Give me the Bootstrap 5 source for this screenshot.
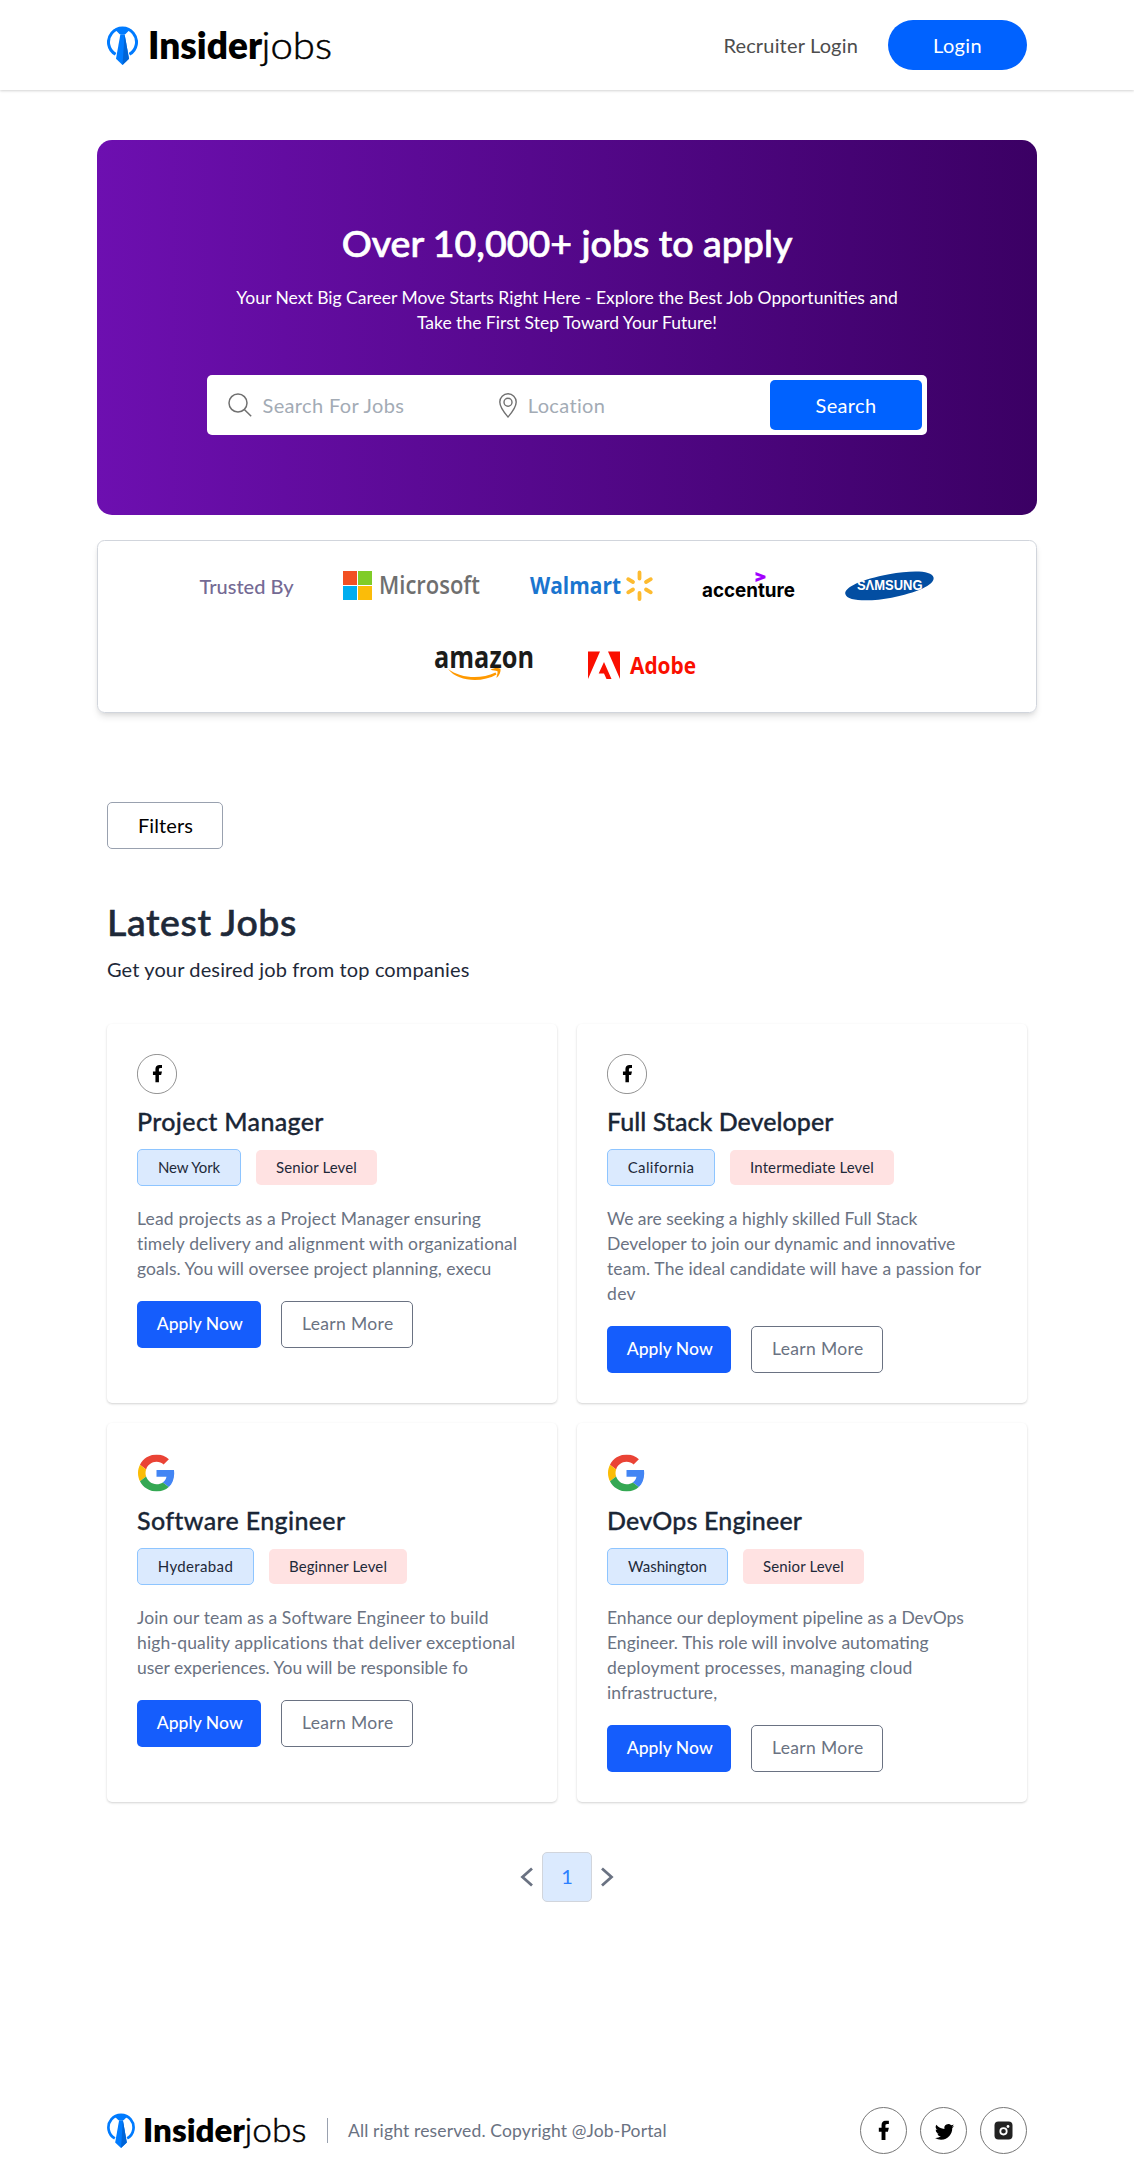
<!DOCTYPE html>
<html lang="en">
<head>
<meta charset="utf-8">
<meta name="viewport" content="width=device-width, initial-scale=1">
<title>Insiderjobs</title>
<link rel="stylesheet" href="https://cdn.jsdelivr.net/npm/bootstrap@5.3.0/dist/css/bootstrap.min.css">
<style>
body{font-family:Lato,"Open Sans",sans-serif;font-size:20px;line-height:30px;color:#1e2939;background:#fff}
svg{display:block;flex:none;overflow:visible}
.ls-a{letter-spacing:.05px}.ls-b{letter-spacing:.12px}.ls-c{letter-spacing:.17px}.ls-d{letter-spacing:.35px}.ls-e{letter-spacing:.6px}.ls-n{letter-spacing:-.14px}
.page-wrap{width:920px}
.wide-wrap{width:940px}
.site-head{height:90px;box-shadow:0 1px 3px rgba(0,0,0,.1),0 1px 2px rgba(0,0,0,.08)}
.recruiter{color:#4d4d4d;text-decoration:none;padding-bottom:1px}
.btn-login{width:139px;height:50px;border-radius:25px;background:#0062ff;color:#fff;font-size:20px;padding:0 0 1px}
.hero{margin-top:50px;height:375px;border-radius:15px;background:linear-gradient(to right,#6d0fb0,#3b0064);color:#fff;padding-top:79.5px}
.hero h1{font-size:37.5px;line-height:45px;font-weight:500;margin:0 0 20.5px;-webkit-text-stroke:.7px currentColor}
.hero-sub{font-size:17.5px;line-height:25px;margin-bottom:40px}
.search-box{width:720px;height:60px;border-radius:5px;background:#fff;padding:5px}
.search-box input{border:0;outline:0;background:none;padding:0;width:200px;color:#4a5565}
.search-box input::placeholder{color:#a3abb5;opacity:1}
.in-query{margin-left:10.5px}
.in-place{margin-left:11px}
.pin-field{margin-left:-6px}
.btn-find{width:152px;height:50px;border-radius:5px;background:#0062ff;color:#fff;font-size:20px;padding:0 0 1px}
.trusted{margin-top:25px;height:173px;border:1px solid #d1d5dc;border-radius:7.5px;box-shadow:0 5px 7px -1px rgba(0,0,0,.1),0 2px 5px -2px rgba(0,0,0,.1)}
.trusted-label{color:#746a94;font-weight:500;width:94px}
.brand-row{height:80px}
.brand-first{gap:49.5px;padding:9px 0 0 101.5px}
.brand-second{gap:54px;padding:10px 0 0 336px}
.btn-filters{width:116px;height:47px;border:1px solid #99a1af;border-radius:5px;color:#000;font-size:20px;padding:0 0 2px 1px;margin-top:89px}
h2{font-size:37.5px;line-height:50px;font-weight:500;margin:47.5px 0 7px;-webkit-text-stroke:.6px currentColor}
.job-grid{display:grid;grid-template-columns:450px 450px;gap:20px;margin-top:40px}
.job{height:379.2px;border-radius:5px;padding:30px;box-shadow:0 1px 3px rgba(0,0,0,.11),0 1px 2px rgba(0,0,0,.08)}
.job h3{font-size:25px;line-height:35px;font-weight:500;margin:10px 0;color:#1a2636;-webkit-text-stroke:.3px currentColor}
.tag-row{gap:15px}
.act-row{gap:20px}
.chip{font-size:15px;line-height:20px;padding:7.5px 0;border-radius:5px;text-align:center}
.chip-place{background:#dbeafe;border:1px solid #8ec5ff}
.chip-level{background:#ffe2e2}
.w104{width:104px}.w108{width:108px}.w117{width:117px}.w121{width:121px}.w133{width:133px}.w164{width:164px}
.job p{font-size:17.5px;line-height:25px;color:#6a7282;margin:20px 0;white-space:nowrap}
.btn-apply,.btn-learn{height:47px;border-radius:5px;font-size:17.5px;line-height:25px;padding:0 0 1px 1.5px}
.btn-apply{width:124px;background:#155dfc;color:#fff;font-weight:500}
.btn-learn{width:132px;border:1px solid #6a7282;color:#6a7282}
.pager{margin-top:50px;height:50px;gap:9px}
.pager-num{width:50px;height:50px;border:1px solid #d1d5dc;border-radius:5px;background:#dbeafe;color:#2b7fff;text-decoration:none;padding-bottom:1px}
footer{margin-top:205px;height:62px}
.foot-bar{height:47px}
.foot-rule{width:1px;height:25px;background:#99a1af;margin:0 20px}
.foot-note{font-size:17.5px;line-height:25px;color:#6a7282;letter-spacing:.14px}
.social{gap:13px}
</style>
</head>
<body>
<svg width="0" height="0" class="position-absolute" aria-hidden="true">
<defs>
<symbol id="mark-tie" viewBox="0 0 31 39">
<path d="M8.6 28.3A14 14 0 1 1 22.4 28.3" fill="none" stroke="#007bff" stroke-width="3"/>
<path d="M6.5 3.500Q15.500 0 24.500 3.500L21.500 5 18.300 8.200H12.700L9.500 5z" fill="#007bff"/>
<path d="M13.400 8.200h4.200L22 32.800 15.500 39 9 32.800z" fill="#007bff"/>
<path d="M17.600 8.200L22 32.800 15.500 39z" fill="#0064d6"/>
</symbol>
<symbol id="ic-fb" viewBox="7 2 10.5 20"><path d="M14 13.5h2.5l1-4H14v-2c0-1.03 0-2 2-2h1.5V2.14c-.326-.043-1.557-.14-2.857-.14C11.928 2 10 3.657 10 6.7v2.8H7v4h3V22h4z"/></symbol>
<symbol id="fb-round" viewBox="0 0 40 40"><circle cx="20" cy="20" r="19.6" fill="#fff" stroke="#777" stroke-width=".8"/><use href="#ic-fb" x="15.7" y="11" width="9.4" height="17.5"/></symbol>
<symbol id="g-logo" viewBox="0 0 48 48">
<path fill="#EA4335" d="M24 9.5c3.54 0 6.71 1.22 9.21 3.6l6.85-6.85C35.9 2.38 30.47 0 24 0 14.62 0 6.51 5.38 2.56 13.22l7.98 6.19C12.43 13.72 17.74 9.5 24 9.5z"/>
<path fill="#4285F4" d="M46.98 24.55c0-1.57-.15-3.09-.38-4.55H24v9.02h12.94c-.58 2.96-2.26 5.48-4.78 7.18l7.73 6c4.51-4.18 7.09-10.36 7.09-17.65z"/>
<path fill="#FBBC05" d="M10.53 28.59c-.48-1.45-.76-2.99-.76-4.59s.27-3.14.76-4.59l-7.98-6.19C.92 16.46 0 20.12 0 24c0 3.88.92 7.54 2.56 10.78l7.97-6.19z"/>
<path fill="#34A853" d="M24 48c6.48 0 11.93-2.13 15.89-5.81l-7.73-6c-2.15 1.45-4.92 2.3-8.16 2.3-6.26 0-11.57-4.22-13.47-9.91l-7.98 6.19C6.51 42.62 14.62 48 24 48z"/>
</symbol>
</defs>
</svg>

<header class="site-head">
<div class="page-wrap mx-auto h-100 d-flex align-items-center justify-content-between">
<svg width="226" height="50" viewBox="0 0 226 50" role="img" aria-label="Insiderjobs">
<use href="#mark-tie" x="0" y="6" width="31" height="39"/>
<text y="39" font-family="Lato" font-size="37.5"><tspan x="41" font-weight="800" textLength="114" lengthAdjust="spacingAndGlyphs">Insider</tspan><tspan x="154.5" font-weight="300" stroke="#000" stroke-width=".5" textLength="70.5" lengthAdjust="spacingAndGlyphs">jobs</tspan></text>
</svg>
<div class="d-flex align-items-center" style="gap:30px">
<a class="recruiter ls-c" href="#">Recruiter Login</a>
<button class="btn btn-login ls-d" type="button">Login</button>
</div>
</div>
</header>

<main>
<section class="hero wide-wrap mx-auto text-center">
<h1>Over 10,000+ jobs to apply</h1>
<p class="hero-sub">Your Next Big Career Move Starts Right Here - Explore the Best Job Opportunities and<br>Take the First Step Toward Your Future!</p>
<form class="search-box mx-auto d-flex align-items-center justify-content-between">
<label class="d-flex align-items-center ps-3">
<svg width="24" height="24" viewBox="0 0 24 24" fill="none" stroke="#707070" stroke-width="1.5"><circle cx="10" cy="10" r="9"/><path d="M16.3 16.5L23.2 23.3"/></svg>
<input class="in-query ls-d" type="text" placeholder="Search For Jobs">
</label>
<label class="pin-field d-flex align-items-center">
<svg width="18" height="25" viewBox="0 0 18 25" fill="none" stroke="#707070" stroke-width="1.4"><path d="M9 24C6 20.500 .8 14.500 .8 9a8.200 8.200 0 0 1 16.400 0C17.200 14.500 12 20.500 9 24z"/><circle cx="9" cy="9.300" r="4"/></svg>
<input class="in-place ls-d" type="text" placeholder="Location">
</label>
<button class="btn btn-find ls-d" type="button">Search</button>
</form>
</section>

<section class="trusted wide-wrap mx-auto">
<div class="brand-row brand-first d-flex align-items-center">
<span class="trusted-label text-nowrap">Trusted By</span>
<svg width="137" height="32" viewBox="0 0 137 32"><path fill="#f25022" d="M0 1h14v14H0z"/><path fill="#80cc28" d="M15 1h14v14H15z"/><path fill="#00adef" d="M0 16h14v14H0z"/><path fill="#fbbc09" d="M15 16h14v14H15z"/><text x="36" y="24" font-family="Open Sans" font-weight="600" font-size="24.5" fill="#6f6f6f" textLength="101" lengthAdjust="spacingAndGlyphs">Microsoft</text></svg>
<svg width="123" height="32" viewBox="0 0 123 32"><text x="0" y="24" font-family="Open Sans" font-weight="700" font-size="24" fill="#1a75cf" textLength="91" lengthAdjust="spacingAndGlyphs">Walmart</text>
<g stroke="#fdbb30" stroke-width="3.8" stroke-linecap="round"><path d="M109.500 2.500V8.500M109.500 23V29M116 12L120.800 9.200M116 19.500L120.800 22.300M103 12L98.200 9.200M103 19.500L98.200 22.300"/></g></svg>
<svg width="93" height="32" viewBox="0 0 93 32"><text x="0" y="26.500" font-family="Inter" font-weight="700" font-size="20" fill="#000" textLength="93" lengthAdjust="spacingAndGlyphs">accenture</text><path d="M53.500 2L63.500 5.700v2.600L53.500 12V8.800L59 7 53.500 5.200z" fill="#a100ff"/></svg>
<svg width="89" height="32" viewBox="0 0 82 32" preserveAspectRatio="none"><path fill="#034ea2" d="M81.600 7.500C80 0 61 .2 40.500 4.200 15 9.200-1 17.500.3 24 1.800 32 25 31.500 43 27.700 65 23 83 15 81.600 7.500z"/><text x="11" y="20.300" font-family="Liberation Sans" font-weight="700" font-size="14.500" fill="#fff" textLength="60.500" lengthAdjust="spacingAndGlyphs">SΛMSUNG</text></svg>
</div>
<div class="brand-row brand-second d-flex align-items-center">
<svg width="100" height="34" viewBox="0 0 100 34"><text x="0" y="18.500" font-family="Open Sans" font-weight="700" font-size="31" fill="#1c1c1a" textLength="100" lengthAdjust="spacingAndGlyphs">amazon</text><path d="M14 20C26 29 46 31 61.500 23.500L62.500 25.500C48 34 24 33 14 20z" fill="#f90"/><path d="M56.500 20.800C60 18.500 65 18.800 66.500 20 67 22.500 65.500 26.500 62.500 29 62.500 26.500 64 24.500 63.500 22.200 61.500 21.500 59 21.800 56.500 20.800z" fill="#f90"/></svg>
<svg width="108" height="32" viewBox="0 0 108 32"><path fill="#fa0f00" d="M0 1.500H12L0 29zM20 1.500H32V29zM16 12L23.500 29H18.500L16 23.500H10.700z"/><text x="42" y="24" font-family="Open Sans" font-weight="700" font-size="22.500" fill="#fa0f00" textLength="66" lengthAdjust="spacingAndGlyphs">Adobe</text></svg>
</div>
</section>

<section class="page-wrap mx-auto">
<button class="btn btn-filters ls-b d-block" type="button">Filters</button>
<h2 class="ls-e">Latest Jobs</h2>
<div class="ls-b">Get your desired job from top companies</div>

<div class="job-grid">
<article class="job">
<svg width="40" height="40"><use href="#fb-round"/></svg>
<h3 class="ls-d">Project Manager</h3>
<div class="tag-row d-flex align-items-center"><span class="chip chip-place w104 ls-n">New York</span><span class="chip chip-level w121 ls-b">Senior Level</span></div>
<p><span class="ls-c">Lead projects as a Project Manager ensuring</span><br><span class="ls-b">timely delivery and alignment with organizational</span><br><span class="ls-a">goals. You will oversee project planning, execu</span></p>
<div class="act-row d-flex"><button class="btn btn-apply ls-a" type="button">Apply Now</button><button class="btn btn-learn ls-d" type="button">Learn More</button></div>
</article>
<article class="job">
<svg width="40" height="40"><use href="#fb-round"/></svg>
<h3 class="ls-a">Full Stack Developer</h3>
<div class="tag-row d-flex align-items-center"><span class="chip chip-place w108 ls-d">California</span><span class="chip chip-level w164 ls-b">Intermediate Level</span></div>
<p>We are seeking a highly skilled Full Stack<br>Developer to join our dynamic and innovative<br><span class="ls-b">team. The ideal candidate will have a passion for</span><br><span class="ls-d">dev</span></p>
<div class="act-row d-flex"><button class="btn btn-apply ls-a" type="button">Apply Now</button><button class="btn btn-learn ls-d" type="button">Learn More</button></div>
</article>
<article class="job">
<svg width="40" height="40"><use href="#g-logo" x="1" y="1.5" width="37" height="37"/></svg>
<h3 class="ls-d">Software Engineer</h3>
<div class="tag-row d-flex align-items-center"><span class="chip chip-place w117 ls-d">Hyderabad</span><span class="chip chip-level ls-b" style="width:138px">Beginner Level</span></div>
<p><span class="ls-b">Join our team as a Software Engineer to build</span><br><span class="ls-c">high-quality applications that deliver exceptional</span><br>user experiences. You will be responsible fo</p>
<div class="act-row d-flex"><button class="btn btn-apply ls-a" type="button">Apply Now</button><button class="btn btn-learn ls-d" type="button">Learn More</button></div>
</article>
<article class="job">
<svg width="40" height="40"><use href="#g-logo" x="1" y="1.5" width="37" height="37"/></svg>
<h3 class="ls-c">DevOps Engineer</h3>
<div class="tag-row d-flex align-items-center"><span class="chip chip-place w121">Washington</span><span class="chip chip-level w121 ls-b">Senior Level</span></div>
<p>Enhance our deployment pipeline as a DevOps<br>Engineer. This role will involve automating<br><span class="ls-c">deployment processes, managing cloud</span><br><span class="ls-b">infrastructure,</span></p>
<div class="act-row d-flex"><button class="btn btn-apply ls-a" type="button">Apply Now</button><button class="btn btn-learn ls-d" type="button">Learn More</button></div>
</article>
</div>

<nav class="pager d-flex align-items-center justify-content-center" aria-label="Pages">
<svg width="13" height="20" viewBox="0 0 13 20" fill="none" stroke="#6a7282" stroke-width="2.8"><path d="M12 1.500L2.500 10l9.500 8.500"/></svg>
<a class="pager-num d-flex align-items-center justify-content-center" href="#">1</a>
<svg width="13" height="20" viewBox="0 0 13 20" fill="none" stroke="#6a7282" stroke-width="2.8"><path d="M1 1.500L10.500 10 1 18.500"/></svg>
</nav>
</section>
</main>

<footer class="page-wrap mx-auto d-flex align-items-start">
<div class="foot-bar d-flex align-items-center w-100">
<svg width="200" height="44" viewBox="0 0 200 44" role="img" aria-label="Insiderjobs">
<use href="#mark-tie" x="0" y="5" width="28" height="35"/>
<text y="34" font-family="Lato" font-size="32.5"><tspan x="36" font-weight="800" textLength="102" lengthAdjust="spacingAndGlyphs">Insider</tspan><tspan x="137.5" font-weight="300" stroke="#000" stroke-width=".5" textLength="62" lengthAdjust="spacingAndGlyphs">jobs</tspan></text>
</svg>
<span class="foot-rule"></span>
<span class="foot-note">All right reserved. Copyright @Job-Portal</span>
<div class="social d-flex ms-auto">
<svg width="47" height="47" viewBox="0 0 47 47"><circle cx="23.5" cy="23.5" r="23" fill="#fff" stroke="#777"/><use href="#ic-fb" x="18.5" y="13.5" width="10.5" height="19.5"/></svg>
<svg width="47" height="47" viewBox="0 0 47 47"><circle cx="23.5" cy="23.5" r="23" fill="#fff" stroke="#777"/><path transform="translate(15 14.7) scale(1.2)" d="M5.026 15c6.038 0 9.341-5.003 9.341-9.334 0-.14 0-.282-.006-.422A6.685 6.685 0 0 0 16 3.542a6.658 6.658 0 0 1-1.889.518 3.301 3.301 0 0 0 1.447-1.817 6.533 6.533 0 0 1-2.087.793A3.286 3.286 0 0 0 7.875 6.030a9.325 9.325 0 0 1-6.767-3.429 3.289 3.289 0 0 0 1.018 4.382A3.323 3.323 0 0 1 .64 6.575v.045a3.288 3.288 0 0 0 2.632 3.218 3.203 3.203 0 0 1-.865.115 3.230 3.230 0 0 1-.614-.057 3.283 3.283 0 0 0 3.067 2.277A6.588 6.588 0 0 1 .78 13.580a6.320 6.320 0 0 1-.78-.045A9.344 9.344 0 0 0 5.026 15z"/></svg>
<svg width="47" height="47" viewBox="0 0 47 47"><circle cx="23.5" cy="23.5" r="23" fill="#fff" stroke="#777"/><rect x="14.5" y="14.5" width="18" height="18" rx="4" fill="#222"/><circle cx="23.5" cy="24.3" r="3.2" fill="none" stroke="#fff" stroke-width="1.8"/><circle cx="28" cy="19.5" r="1.4" fill="#fff"/></svg>
</div>
</div>
</footer>
<script src="https://cdn.jsdelivr.net/npm/bootstrap@5.3.0/dist/js/bootstrap.bundle.min.js"></script>
</body>
</html>
